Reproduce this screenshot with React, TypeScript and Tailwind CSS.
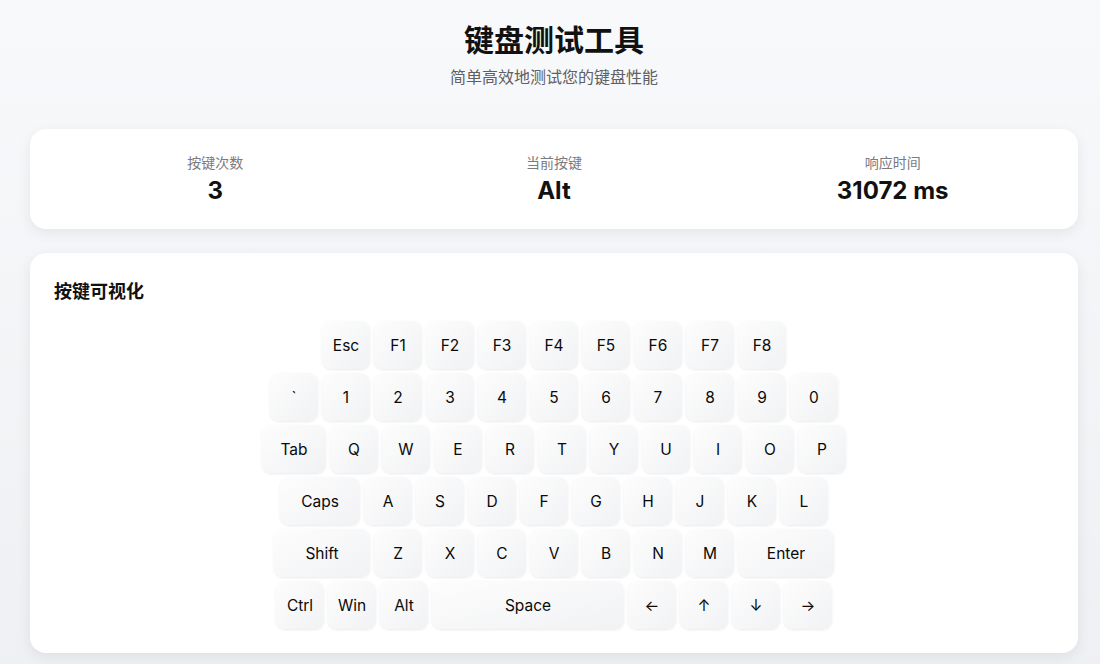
import React from "react";

type K = { label: string; w?: string };

const rows: K[][] = [
  ["Esc", "F1", "F2", "F3", "F4", "F5", "F6", "F7", "F8"].map((l) => ({ label: l })),
  ["`", "1", "2", "3", "4", "5", "6", "7", "8", "9", "0"].map((l) => ({ label: l })),
  [{ label: "Tab", w: "w-[64px]" }, ...["Q", "W", "E", "R", "T", "Y", "U", "I", "O", "P"].map((l) => ({ label: l }))],
  [{ label: "Caps", w: "w-[80px]" }, ...["A", "S", "D", "F", "G", "H", "J", "K", "L"].map((l) => ({ label: l }))],
  [
    { label: "Shift", w: "w-[96px]" },
    ...["Z", "X", "C", "V", "B", "N", "M"].map((l) => ({ label: l })),
    { label: "Enter", w: "w-[96px]" },
  ],
  [
    { label: "Ctrl" },
    { label: "Win" },
    { label: "Alt" },
    { label: "Space", w: "w-[192px]" },
    { label: "←" },
    { label: "↑" },
    { label: "↓" },
    { label: "→" },
  ],
];

function Key({ k }: { k: K }) {
  return (
    <div
      className={`${k.w ?? "w-[48px]"} h-[48px] pt-[1px] rounded-[9px] bg-gradient-to-br from-[#fdfdfd] to-[#f1f2f4] shadow-[0_1px_3px_rgba(0,0,0,0.07),0_1px_1px_rgba(0,0,0,0.02)] flex items-center justify-center text-[15.5px] font-normal text-[#0a0a0a]`}
    >
      {k.label}
    </div>
  );
}

function Stat({ label, value }: { label: string; value: string }) {
  return (
    <div className="flex flex-col items-center">
      <div className="text-[14px] leading-[20px] text-[#7a7a7f]">{label}</div>
      <div className="mt-[2px] text-[24px] leading-[32px] font-bold text-[#111]">{value}</div>
    </div>
  );
}

export default function App() {
  return (
    <div
      className="h-[664px] overflow-hidden bg-gradient-to-b from-[#f8f9fb] to-[#eff0f3] pl-[30px] pr-[22px] pt-[21px]"
      style={{ fontFamily: 'Inter, "Noto Sans CJK SC", sans-serif' }}
    >
      <div className="flex flex-col items-center">
        <h1 className="text-[30px] leading-[38px] font-bold text-[#111]">键盘测试工具</h1>
        <p className="mt-[7px] text-[16px] leading-[22px] text-[#5f5f64]">简单高效地测试您的键盘性能</p>
      </div>

      <div className="mt-[41px] bg-white rounded-[16px] shadow-[0_4px_14px_rgba(0,0,0,0.07)] grid grid-cols-3 px-[16px] pt-[24px] pb-[22px]">
        <Stat label="按键次数" value="3" />
        <Stat label="当前按键" value="Alt" />
        <Stat label="响应时间" value="31072 ms" />
      </div>

      <div className="mt-[24px] bg-white rounded-[16px] shadow-[0_4px_14px_rgba(0,0,0,0.07)] p-[24px]">
        <h2 className="pt-[1px] h-[28px] text-[18px] leading-[28px] font-semibold text-[#111]">按键可视化</h2>
        <div className="mt-[16px] flex flex-col items-center gap-[4px]">
          {rows.map((row, i) => (
            <div key={i} className="flex gap-[4px]">
              {row.map((k, j) => (
                <Key key={j} k={k} />
              ))}
            </div>
          ))}
        </div>
      </div>
    </div>
  );
}
